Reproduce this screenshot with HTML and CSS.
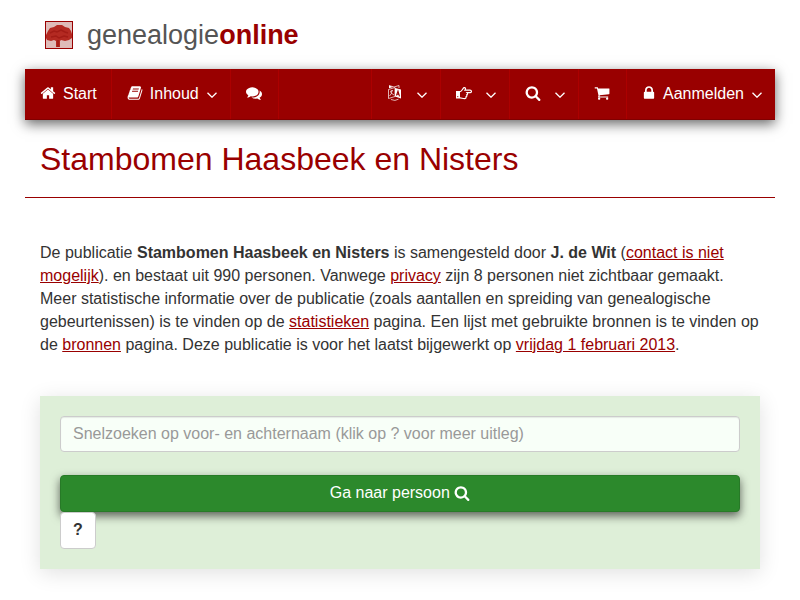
FILE: index.html
```html
<!DOCTYPE html>
<html lang="nl">
<head>
  <meta charset="UTF-8">
  <meta name="viewport" content="width=device-width, initial-scale=1.0">
  <title>Stambomen Haasbeek en Nisters</title>
  <link rel="stylesheet" href="styles.css">
</head>
<body>

  <div class="container">
    <header>
      <a class="logo" href="#">
        <svg class="logo-boom" viewBox="0 0 28 28" aria-hidden="true">
          <rect x=".5" y=".5" width="27" height="27" fill="#dfbcb9" stroke="#900"/>
          <path d="M1 14l2-4 2-3 4-1 3-2 5 0 3 2 4 1 2 3 1 3v4l-3 2-4 1-4-1-1 1v6h-4v-6l-2-1-3 1-4-1-1-2z" fill="#b42a22"/>
          <path d="M5 12l4-2 3 1 4-2 4 2 3 1M6 16l5-1 3 2 5-2 4 1M13 19v7" fill="none" stroke="#a31c16" stroke-width="1.5"/>
        </svg>
        <span>genealogie<b>online</b></span>
      </a>
    </header>

    <nav class="menu">
      <ul class="links">
        <li><a href="#">
          <svg class="icoon" viewBox="0 0 1792 1792" aria-hidden="true"><path d="M1472 992v480q0 26-19 45t-45 19h-384v-384h-256v384h-384q-26 0-45-19t-19-45v-480q0-1 .5-3t.5-3l575-474 575 474q1 2 1 6zm223-69l-62 74q-8 9-21 11h-3q-13 0-21-7l-692-577-692 577q-12 8-24 7-13-2-21-11l-62-74q-8-10-7-23.5t11-21.5l719-599q32-26 76-26t76 26l244 204v-195q0-14 9-23t23-9h192q14 0 23 9t9 23v408l219 182q10 8 11 21.5t-7 23.5z"/></svg>
          <span>Start</span>
        </a></li>
        <li><a href="#">
          <svg class="icoon" viewBox="0 0 1792 1792" aria-hidden="true"><path d="M1703 478q40 57 18 129l-275 906q-19 64-76.5 107.5t-122.5 43.5h-923q-77 0-148.5-53.5t-99.5-131.5q-24-67-2-127 0-4 3-27t4-37q1-8-3-21.5t-3-19.5q2-11 8-21t16.5-23.5 16.5-23.5q23-38 45-91.5t30-91.5q3-10 .5-30t-.5-28q3-11 17-28t17-23q21-36 42-92t25-90q1-9-2.5-32t.5-28q4-13 22-30.5t22-22.5q19-26 42.5-84.5t27.5-96.5q1-8-3-25.5t-2-26.5q2-8 9-18t18-23 17-21q8-12 16.5-30.5t15-35 16-36 19.5-32 26.5-23.5 36-11.5 47.5 5.5l-1 3q38-9 51-9h761q74 0 114 56t18 130l-274 906q-36 119-71.5 153.5t-128.5 34.5h-869q-27 0-38 15-11 16-1 43 24 70 144 70h923q29 0 56-15.5t35-41.5l300-987q7-22 5-57 38 15 59 43zm-1064 2q-4 13 2 22.5t20 9.5h608q13 0 25.5-9.5t16.5-22.5l21-64q4-13-2-22.5t-20-9.5h-608q-13 0-25.5 9.5t-16.5 22.5zm-83 256q-4 13 2 22.5t20 9.5h608q13 0 25.5-9.5t16.5-22.5l21-64q4-13-2-22.5t-20-9.5h-608q-13 0-25.5 9.5t-16.5 22.5z"/></svg>
          <span>Inhoud</span>
          <svg class="pijl" viewBox="0 0 10 6" aria-hidden="true"><path d="M.5 .7l4.500 4.500 4.500-4.500"/></svg>
        </a></li>
        <li><a class="smal" href="#" aria-label="Forum">
          <svg class="icoon" viewBox="0 0 1792 1792" aria-hidden="true"><path d="M1408 768q0 139-94 257t-256.5 186.5-353.5 68.5q-86 0-176-16-124 88-278 128-36 9-86 16h-3q-11 0-20.5-8t-11.5-21q-1-3-1-6.5t.5-6.5 2-6l2.5-5 3.5-5.5 4-5 4.5-5 4-4.5q5-6 23-25t26-29.5 22.5-29 25-38.5 20.5-44q-124-72-195-177t-71-224q0-139 94-257t256.5-186.5 353.5-68.5 353.5 68.5 256.5 186.5 94 257zm384 256q0 120-71 224.5t-195 176.5q10 24 20.5 44t25 38.5 22.5 29 26 29.5 23 25q1 1 4 4.5t4.5 5 4 5 3.5 5.5l2.5 5 2 6 .5 6.5-1 6.5q-3 14-13 22t-22 7q-50-7-86-16-154-40-278-128-90 16-176 16-271 0-472-132 58 4 88 4 161 0 309-45t264-129q125-92 192-212t67-254q0-77-23-152 129 71 204 178t75 230z"/></svg>
        </a></li>
      </ul>
      <ul class="rechts">
        <li><a class="ruim" href="#" aria-label="Taal">
          <svg class="icoon" viewBox="0 0 16 16" aria-hidden="true">
            <path d="M8 3l6 1.600v9l-6-2z"/>
            <path d="M9.500 10.500l1.500-4.500 1.500 5.300M10 9l2 .5" fill="none" stroke="#900" stroke-width="1.100"/>
            <path d="M2 .5l5 1.500 5-1.500v2.500M1.500 4.500L8 2.500v9L1.500 13.500zM3 6.500l3-1M5 5q0 4-2.500 6M3.500 7.500L7 10M4 14.500q4 2 7.500-.3" fill="none" stroke="#fff" stroke-width=".7"/>
            <path d="M2 .5l4 1.400-4 1.300z"/>
          </svg>
          <svg class="pijl" viewBox="0 0 10 6" aria-hidden="true"><path d="M.5 .7l4.500 4.500 4.500-4.500"/></svg>
        </a></li>
        <li><a class="ruim" href="#" aria-label="Verwijzingen">
          <svg class="icoon" viewBox="0 0 16 16" aria-hidden="true">
            <path d="M0 6h4v7.500H0z"/>
            <path d="M4 6.600c2 0 2.500-3.300 4-4 1.500-.4 1.900 1.200 1 2.500h5c1.900 0 1.900 2.600 0 2.600h-3c1 1 .5 2-.3 2.200.5 1-.1 1.700-.7 1.900.3 1.200-.4 1.900-1.500 1.900C6.500 13.700 5.500 12.900 4 12.900" fill="none" stroke="#fff" stroke-width="1.200"/>
            <circle cx="1.800" cy="11.600" r=".6" fill="#900"/>
          </svg>
          <svg class="pijl" viewBox="0 0 10 6" aria-hidden="true"><path d="M.5 .7l4.500 4.500 4.500-4.500"/></svg>
        </a></li>
        <li><a class="ruim" href="#" aria-label="Zoeken">
          <svg class="icoon" viewBox="0 0 1792 1792" aria-hidden="true"><path d="M1216 832q0-185-131.500-316.500t-316.500-131.500-316.500 131.500-131.500 316.500 131.500 316.500 316.500 131.500 316.500-131.500 131.500-316.500zm512 832q0 52-38 90t-90 38q-54 0-90-38l-343-342q-179 124-399 124-143 0-273.500-55.500t-225-150-150-225-55.500-273.500 55.500-273.500 150-225 225-150 273.500-55.500 273.500 55.500 225 150 150 225 55.500 273.500q0 220-124 399l343 343q37 37 37 90z"/></svg>
          <svg class="pijl" viewBox="0 0 10 6" aria-hidden="true"><path d="M.5 .7l4.500 4.500 4.500-4.500"/></svg>
        </a></li>
        <li><a class="smal" href="#" aria-label="Winkelwagen">
          <svg class="icoon" viewBox="0 0 1792 1792" aria-hidden="true"><path d="M704 1536q0 52-38 90t-90 38-90-38-38-90 38-90 90-38 90 38 38 90zm896 0q0 52-38 90t-90 38-90-38-38-90 38-90 90-38 90 38 38 90zm128-1088v512q0 24-16.500 42.500t-40.500 21.500l-1044 122q13 60 13 70 0 16-24 64h920q26 0 45 19t19 45-19 45-45 19h-1024q-26 0-45-19t-19-45q0-11 8-31.500t16-36 21.500-40 15.500-29.500l-177-823h-204q-26 0-45-19t-19-45 19-45 45-19h256q16 0 28.500 6.500t19.500 15.500 13 24.500 8 26 5.500 29.500 4.500 26h1201q26 0 45 19t19 45z"/></svg>
        </a></li>
        <li><a href="#">
          <svg class="icoon slot" viewBox="320 0 1152 1792" aria-hidden="true"><path d="M640 768h512v-192q0-106-75-181t-181-75-181 75-75 181v192zm832 96v576q0 40-28 68t-68 28h-960q-40 0-68-28t-28-68v-576q0-40 28-68t68-28h32v-192q0-184 132-316t316-132 316 132 132 316v192h32q40 0 68 28t28 68z"/></svg>
          <span>Aanmelden</span>
          <svg class="pijl" viewBox="0 0 10 6" aria-hidden="true"><path d="M.5 .7l4.500 4.500 4.500-4.500"/></svg>
        </a></li>
      </ul>
    </nav>

    <h1>Stambomen Haasbeek en Nisters</h1>

    <main>
      <p>De publicatie <b>Stambomen Haasbeek en Nisters</b> is samengesteld door <b>J. de Wit</b> (<a href="#">contact is niet mogelijk</a>). en bestaat uit 990 personen. Vanwege <a href="#">privacy</a> zijn 8 personen niet zichtbaar gemaakt. Meer statistische informatie over de publicatie (zoals aantallen en spreiding van genealogische gebeurtenissen) is te vinden op de <a href="#">statistieken</a> pagina. Een lijst met gebruikte bronnen is te vinden op de <a href="#">bronnen</a> pagina. Deze publicatie is voor het laatst bijgewerkt op <a href="#">vrijdag 1 februari 2013</a>.</p>

      <form class="zoekvak">
        <input type="text" name="q" aria-label="Snelzoeken" placeholder="Snelzoeken op voor- en achternaam (klik op ? voor meer uitleg)">
        <button class="btn btn-zoek" type="submit">Ga naar persoon
          <svg class="icoon" viewBox="0 0 1792 1792" aria-hidden="true"><path d="M1216 832q0-185-131.500-316.500t-316.500-131.500-316.500 131.500-131.500 316.500 131.500 316.500 316.500 131.500 316.500-131.500 131.500-316.500zm512 832q0 52-38 90t-90 38q-54 0-90-38l-343-342q-179 124-399 124-143 0-273.500-55.500t-225-150-150-225-55.500-273.500 55.500-273.500 150-225 225-150 273.500-55.500 273.500 55.500 225 150 150 225 55.500 273.500q0 220-124 399l343 343q37 37 37 90z"/></svg>
        </button>
        <button class="btn btn-help" type="button">?</button>
      </form>
    </main>
  </div>

</body>
</html>
```
FILE: styles.css
```css
* { box-sizing: border-box; }

body {
  margin: 0;
  background: #fff;
  color: #333;
  font-family: "Liberation Sans", Arial, sans-serif;
  font-size: 16px;
  line-height: 23px;
}

a { color: #900; }

.container { padding: 0 25px; }

/* Logo */
header { padding: 18px 20px 14px; }
.logo {
  display: inline-flex;
  align-items: center;
  gap: 14px;
  color: #555;
  font-size: 27px;
  line-height: 34px;
  text-decoration: none;
}
.logo b { color: #900; }
.logo-boom { width: 28px; height: 28px; }

/* Menu */
.menu {
  display: flex;
  justify-content: space-between;
  background: #900;
  border-bottom: 1px solid #800000;
  box-shadow: 0 4px 12px rgba(0,0,0,0.6);
}
.menu ul {
  display: flex;
  margin: 0;
  padding: 0;
  list-style: none;
}
.links li { border-right: 1px solid #ac0000; }
.rechts li { border-left: 1px solid #ac0000; }
.menu a {
  display: flex;
  align-items: center;
  gap: 7px;
  height: 50px;
  padding: 0 14px 2px 15px;
  color: #fff;
  text-decoration: none;
}
.menu .smal { padding-right: 16px; }
.menu .ruim { gap: 13px; }
.icoon { width: 16px; height: 16px; fill: #fff; }
.slot { width: 14px; }
.pijl {
  width: 10px;
  height: 6px;
  margin: 3px -1px 0 1px;
  fill: none;
  stroke: #fff;
  stroke-width: 1.3;
}

/* Titel */
h1 {
  margin: 0;
  padding: 19px 15px 18px;
  border-bottom: 1px solid #900;
  color: #900;
  font-size: 32px;
  font-weight: normal;
  line-height: 40px;
}

main { padding: 43px 15px 30px; }
p { margin: 0 0 40px; }

/* Snelzoeken */
.zoekvak {
  padding: 20px;
  background: #deefd8;
  box-shadow: 0 4px 20px rgba(0,0,0,0.12);
}
.zoekvak input {
  display: block;
  width: 100%;
  height: 36px;
  margin-bottom: 23px;
  padding: 6px 12px;
  background: #f8fff8;
  border: 1px solid #ccc;
  border-radius: 4px;
  box-shadow: inset 0 1px 1px rgba(0,0,0,0.08);
  color: #555;
  font: inherit;
}
.zoekvak input::placeholder { color: #999; }

.btn {
  display: block;
  height: 37px;
  padding: 0 12px 2px;
  border: 1px solid #ccc;
  border-radius: 4px;
  font: inherit;
  cursor: pointer;
}
.btn-zoek {
  width: 100%;
  background: #2c892c;
  border-color: #277a27;
  box-shadow: 0 4px 10px rgba(0,0,0,0.6);
  color: #fff;
}
.btn-zoek .icoon { vertical-align: -3px; }
.btn-help {
  position: relative;
  background: #fff;
  color: #333;
  font-weight: bold;
}
```
